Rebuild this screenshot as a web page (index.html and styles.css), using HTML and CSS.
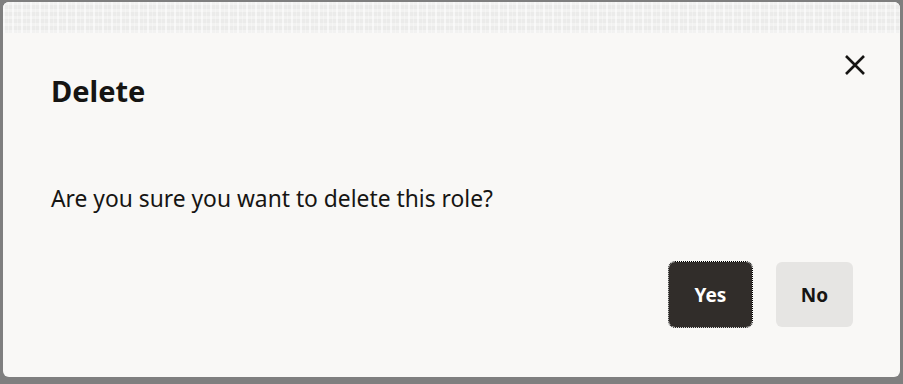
FILE: index.html
```html
<!DOCTYPE html>
<html>
<head>
<meta charset="utf-8">
<link rel="stylesheet" href="styles.css">
</head>
<body>
<div class="dialog">
  <div class="band"></div>
  <div class="content">
    <div class="header">
      <h1 class="title">Delete</h1>
      <button class="close" aria-label="Close">
        <svg width="22" height="22" viewBox="0 0 22 22"><path d="M2 2 L20 20 M20 2 L2 20" stroke="#161513" stroke-width="2.6" fill="none"/></svg>
      </button>
    </div>
    <p class="message">Are you sure you want to delete this role?</p>
    <div class="actions">
      <button class="btn btn-yes">Yes</button>
      <button class="btn btn-no">No</button>
    </div>
  </div>
</div>
</body>
</html>
```
FILE: styles.css
```css
html, body { margin: 0; padding: 0; }
body {
  background: #7f7f7f;
  width: 903px;
  height: 384px;
  overflow: hidden;
  font-family: "Noto Sans", "Open Sans", sans-serif;
  color: #161513;
}
.dialog {
  margin: 2px 3px 0 3px;
  width: 897px;
  height: 375px;
  background: #f9f8f6;
  border-radius: 6px;
  overflow: hidden;
  display: flex;
  flex-direction: column;
}
.band {
  height: 31px;
  flex: none;
  background-color: #ebebea;
  background-image:
    repeating-linear-gradient(90deg, rgba(255,255,255,0.55) 0 2px, transparent 2px 5px, rgba(255,255,255,0.3) 5px 6px, transparent 6px 9px),
    repeating-linear-gradient(0deg, rgba(255,255,255,0.35) 0 3px, transparent 3px 7px);
}
.content {
  flex: 1;
  padding: 0 48px 0 48px;
  display: flex;
  flex-direction: column;
}
.header {
  display: flex;
  justify-content: space-between;
  align-items: flex-start;
  height: 100px;
}
.title {
  margin: 40px 0 0 0;
  font-size: 29px;
  font-weight: 700;
  line-height: 36px;
}
.close {
  margin: 21px -14px 0 0;
  width: 22px;
  height: 22px;
  padding: 0;
  border: 0;
  background: none;
  display: flex;
}
.message {
  margin: 51px 0 0 0;
  font-size: 22.8px;
  line-height: 30px;
  color: #161513;
}
.actions {
  display: flex;
  justify-content: flex-end;
  gap: 24px;
  margin-top: 48px;
  margin-right: -1px;
}
.btn {
  height: 65px;
  border: 0;
  border-radius: 6px;
  font-family: "Noto Sans", "Open Sans", sans-serif;
  font-size: 19px;
  font-weight: 700;
  cursor: pointer;
}
.btn-yes {
  width: 83px;
  background: #312d2a;
  color: #ffffff;
  outline: 1px dotted #000;
  outline-offset: 0;
}
.btn-no {
  width: 77px;
  background: #e6e5e3;
  color: #161513;
}
```
